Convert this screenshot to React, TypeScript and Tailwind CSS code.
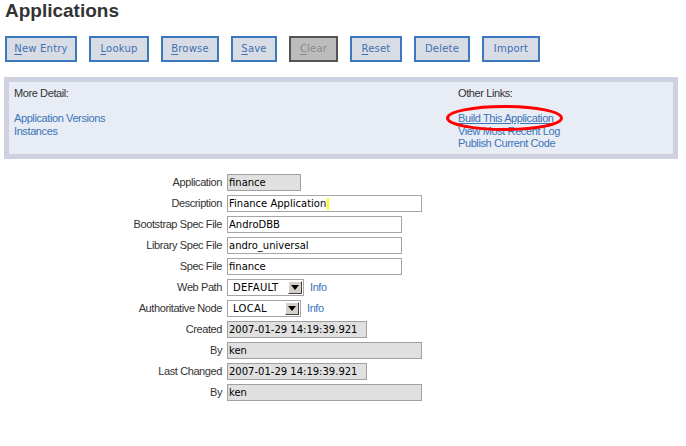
import { Fragment } from "react";

type ButtonItem = {
    label: string;
    hotkey?: boolean;
    width: string;
    disabled?: boolean;
};

type FieldItem = {
    label: string;
    value: string;
    width: string;
    kind: "text" | "readonly" | "select";
    cursor?: boolean;
};

const buttons: ButtonItem[] = [
    { label: "New Entry", hotkey: true, width: "w-[72px]" },
    { label: "Lookup", hotkey: true, width: "w-[60px]" },
    { label: "Browse", hotkey: true, width: "w-[58px]" },
    { label: "Save", hotkey: true, width: "w-[46px]" },
    { label: "Clear", hotkey: true, width: "w-[49px]", disabled: true },
    { label: "Reset", hotkey: true, width: "w-[52px]" },
    { label: "Delete", width: "w-[56px]" },
    { label: "Import", width: "w-[58px]" }
];

const fields: FieldItem[] = [
    { label: "Application", value: "finance", width: "w-[74px]", kind: "readonly" },
    { label: "Description", value: "Finance Application", width: "w-[195px]", kind: "text", cursor: true },
    { label: "Bootstrap Spec File", value: "AndroDBB", width: "w-[175px]", kind: "text" },
    { label: "Library Spec File", value: "andro_universal", width: "w-[175px]", kind: "text" },
    { label: "Spec File", value: "finance", width: "w-[175px]", kind: "text" },
    { label: "Web Path", value: "DEFAULT", width: "w-[77px]", kind: "select" },
    { label: "Authoritative Node", value: "LOCAL", width: "w-[74px]", kind: "select" },
    { label: "Created", value: "2007-01-29 14:19:39.921", width: "w-[140px]", kind: "readonly" },
    { label: "By", value: "ken", width: "w-[195px]", kind: "readonly" },
    { label: "Last Changed", value: "2007-01-29 14:19:39.921", width: "w-[140px]", kind: "readonly" },
    { label: "By", value: "ken", width: "w-[195px]", kind: "readonly" }
];

const ToolButton = ({ ...props }: ButtonItem) => {
    const { label, hotkey, width, disabled } = props;

    return (
        <button
        className={
            disabled
                ? `${width} h-[26px] border-2 border-[#555555] bg-[#bcbcbc] text-[#8a8a8a] text-[10px] font-['DejaVu_Sans',sans-serif] leading-none tracking-[0.2px]`
                : `${width} h-[26px] border-2 border-[#3c78be] bg-[#d8dde5] text-[#3f70b2] text-[10px] font-['DejaVu_Sans',sans-serif] leading-none tracking-[0.2px]`
        }>
            {
                hotkey
                    ? (
                        <Fragment>
                            <span className="underline underline-offset-2">{label.charAt(0)}</span>
                            {label.slice(1)}
                        </Fragment>
                    )
                    : label
            }
        </button>
    );
};

const SelectBox = ({ value, width }: { value: string; width: string }) => {
    return (
        <div className={`${width} h-[17px] flex items-stretch border border-[#a5a5a5] bg-white`}>
            <span className="flex-1 pl-[5px] flex items-center text-[10px] font-['DejaVu_Sans',sans-serif] text-black tracking-[0.3px]">
                {value}
            </span>
            <span className="w-[14px] my-[1px] mr-[1px] flex items-center justify-center bg-[#d4d0c8] border-t border-l border-t-white border-l-white border-b border-r border-b-[#404040] border-r-[#404040]">
                <svg width="8" height="5" viewBox="0 0 8 5">
                    <path d="M0 0 H8 L4 5 Z" fill="#000" />
                </svg>
            </span>
        </div>
    );
};

const App = () => {
    return (
        <div className="w-[686px] h-[446px] bg-white relative font-['Liberation_Sans',Arial,sans-serif] text-[#333333]">
            <h1 className="pl-[5px] text-[19px] leading-[22px] font-bold text-[#333333]">
                Applications
            </h1>

            <div className="mt-[14px] pl-[5px] flex gap-[12px]">
                {
                    buttons.map((item, index) => {
                        return (
                            <ToolButton
                            key={index}
                            {...item}
                            />
                        );
                    })
                }
            </div>

            <div className="mt-[15px] ml-[4px] w-[674px] h-[82px] border-[5px] border-[#cdd1e0] bg-[#e8ecf4] flex text-[11px] tracking-[-0.4px] leading-[12.5px] pt-[5px]">
                <div className="w-[449px] pl-[5px] flex flex-col">
                    <span>More Detail:</span>
                    <span>&nbsp;</span>
                    <a className="text-[#3a74ba]">Application Versions</a>
                    <a className="text-[#3a74ba]">Instances</a>
                </div>
                <div className="flex flex-col">
                    <span>Other Links:</span>
                    <span>&nbsp;</span>
                    <a className="text-[#3a74ba] underline">Build This Application</a>
                    <a className="text-[#3a74ba]">View Most Recent Log</a>
                    <a className="text-[#3a74ba]">Publish Current Code</a>
                </div>
            </div>

            {/* red ring drawn over the first link */}
            <svg className="absolute left-[444px] top-[103px]" width="122" height="30" viewBox="0 0 122 30">
                <ellipse cx="60.5" cy="15" rx="57" ry="11.5" fill="none" stroke="#ff0000" strokeWidth="3" />
            </svg>

            <div className="mt-[15px] grid grid-cols-[222px_auto] gap-x-[5px] gap-y-[4px] text-[11px] tracking-[-0.4px]">
                {
                    fields.map((field, index) => {
                        return (
                            <Fragment key={index}>
                                <span className="h-[17px] flex items-center justify-end">
                                    {field.label}
                                </span>
                                {
                                    field.kind === "select"
                                        ? (
                                            <div className="flex items-center gap-[6px]">
                                                <SelectBox value={field.value} width={field.width} />
                                                <a className="text-[#3a74ba]">Info</a>
                                            </div>
                                        )
                                        : (
                                            <div
                                            className={
                                                field.kind === "readonly"
                                                    ? `${field.width} h-[17px] border border-[#a0a0a0] bg-[#e0e0e0] pl-[1px] flex items-center text-[10px] tracking-normal font-['DejaVu_Sans',sans-serif] text-black`
                                                    : `${field.width} h-[17px] border border-[#a5a5a5] bg-white pl-[1px] flex items-center text-[10px] tracking-normal font-['DejaVu_Sans',sans-serif] text-black`
                                            }>
                                                {field.value}
                                                {
                                                    field.cursor && (
                                                        <span className="ml-[1px] w-[2px] h-[12px] bg-[#ffff00]"></span>
                                                    )
                                                }
                                            </div>
                                        )
                                }
                            </Fragment>
                        );
                    })
                }
            </div>
        </div>
    );
};

export default App;
